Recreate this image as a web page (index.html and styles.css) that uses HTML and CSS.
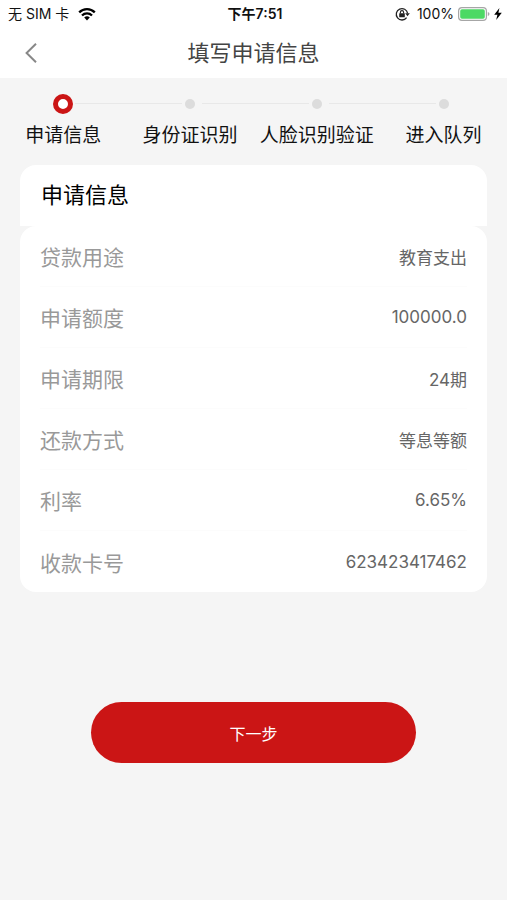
FILE: index.html
```
<!DOCTYPE html>
<html lang="zh-CN">
<head>
    <meta charset="UTF-8">
    <meta name="viewport" content="width=device-width, initial-scale=1.0">
    <title>填写申请信息</title>
    <link rel="stylesheet" href="styles.css">
</head>
<body>
    <header class="header">
        <div class="status-bar">
            <div class="status-left">
                <span>无 SIM 卡</span>
                <svg width="18" height="14" viewBox="0 0 18 14" fill="none" stroke="#000" stroke-width="2.3">
                    <path d="M1.2 5.4a11 11 0 0 1 15.6 0"/>
                    <path d="M4 8.5a7 7 0 0 1 10 0"/>
                    <path d="M9 13.4L6.2 10.6a4 4 0 0 1 5.6 0z" fill="#000" stroke="none"/>
                </svg>
            </div>
            <div class="status-time">下午7:51</div>
            <div class="status-right">
                <svg class="lock" width="15" height="14" viewBox="0 0 15 14" fill="none" stroke="#222">
                    <path d="M11.6 10.6A5.7 5.7 0 1 1 12.6 6.4" stroke-width="1.3"/>
                    <path d="M10.2 6.2h4.6l-2.3 3z" fill="#222" stroke="none"/>
                    <rect x="4.2" y="6.2" width="5.6" height="4" rx="0.5" fill="#222" stroke="none"/>
                    <path d="M5.4 6.4V5.2a1.6 1.6 0 0 1 3.2 0v1.2" stroke-width="1.1"/>
                </svg>
                <span>100%</span>
                <svg width="32" height="14" viewBox="0 0 32 14">
                    <rect x="0.6" y="0.6" width="27.8" height="12.8" rx="3.4" fill="#fff" stroke="#a6a6a6" stroke-width="1.2"/>
                    <rect x="2.2" y="2.2" width="24.6" height="9.6" rx="1.8" fill="#4cd964"/>
                    <path d="M29.8 5v4q1.7-.5 1.7-2t-1.7-2z" fill="#a6a6a6"/>
                </svg>
                <svg width="8" height="12" viewBox="0 0 8 12">
                    <path d="M5.4 0L0.2 6.8h3.2L2.2 12l5.6-7.2H4.4z" fill="#000"/>
                </svg>
            </div>
        </div>
        <div class="nav-bar">
            <button class="back" type="button" aria-label="返回">
                <svg width="12" height="20" viewBox="0 0 12 20" fill="none" stroke="#888" stroke-width="2">
                    <path d="M11 0.8L1.6 10l9.4 9.2"/>
                </svg>
            </button>
            <h1 class="title">填写申请信息</h1>
        </div>
    </header>

    <main>
        <ol class="steps">
            <li class="step active"><span class="dot"></span>申请信息</li>
            <li class="step"><span class="dot"></span>身份证识别</li>
            <li class="step"><span class="dot"></span>人脸识别验证</li>
            <li class="step"><span class="dot"></span>进入队列</li>
        </ol>

        <section class="info">
            <h2 class="info-title">申请信息</h2>
            <dl class="info-list">
                <div class="row"><dt>贷款用途</dt><dd>教育支出</dd></div>
                <div class="row"><dt>申请额度</dt><dd>100000.0</dd></div>
                <div class="row"><dt>申请期限</dt><dd>24期</dd></div>
                <div class="row"><dt>还款方式</dt><dd>等息等额</dd></div>
                <div class="row"><dt>利率</dt><dd>6.65%</dd></div>
                <div class="row"><dt>收款卡号</dt><dd>623423417462</dd></div>
            </dl>
        </section>

        <button class="next" type="button">下一步</button>
    </main>
</body>
</html>
```
FILE: styles.css
```
* {
    box-sizing: border-box;
}
body {
    margin: 0;
    min-height: 100vh;
    background: #f5f5f5;
    color: #111;
    font-family: Inter, "Noto Sans CJK SC", sans-serif;
}
.header {
    background: #fff;
}
.status-bar {
    display: grid;
    grid-template-columns: 1fr auto 1fr;
    align-items: center;
    height: 28px;
    padding: 0 5px 0 8px;
    font-size: 14px;
    line-height: 20px;
}
.status-left,
.status-right {
    display: flex;
    align-items: center;
    gap: 9px;
}
.status-right {
    justify-content: flex-end;
    gap: 4px;
}
.status-time {
    font-weight: 600;
}
.lock {
    margin-right: 3px;
}
.nav-bar {
    display: grid;
    grid-template-columns: 1fr auto 1fr;
    align-items: center;
    height: 50px;
    padding: 0 20px;
}
.back {
    display: flex;
    justify-self: start;
    padding: 5px;
    border: 0;
    background: none;
    cursor: pointer;
}
.title {
    margin: 0;
    color: #444;
    font-size: 22px;
    font-weight: 400;
    line-height: 32px;
}
.steps {
    display: grid;
    grid-template-columns: repeat(4, 1fr);
    margin: 0;
    padding: 16px 0 15px;
    list-style: none;
}
.step {
    position: relative;
    display: flex;
    flex-direction: column;
    align-items: center;
    gap: 8px;
    font-size: 19px;
    line-height: 28px;
    white-space: nowrap;
}
.dot {
    width: 10px;
    height: 10px;
    margin: 5px 0;
    border-radius: 50%;
    background: #dcdcdc;
}
.active .dot {
    width: 20px;
    height: 20px;
    margin: 0;
    border: 5px solid #cb1515;
    background: #fff;
}
/* line to the next step */
.step:not(:last-child)::after {
    content: "";
    position: absolute;
    top: 9px;
    left: calc(50% + 12px);
    width: calc(100% - 20px);
    height: 1px;
    background: #e8e8e8;
}
.info {
    margin: 0 20px;
}
.info-title {
    margin: 0;
    padding: 0 21px;
    border-radius: 16px 16px 0 0;
    background: #fff;
    color: #000;
    font-size: 22px;
    font-weight: 400;
    line-height: 61px;
}
.info-list {
    margin: 0;
    padding: 0 20px;
    border-radius: 16px;
    background: #fff;
}
.row {
    display: flex;
    justify-content: space-between;
    align-items: center;
    height: 61px;
}
.row:not(:last-child) {
    border-bottom: 1px solid #fcfcfc;
}
.row dt {
    color: #999;
    font-size: 21px;
}
.row dd {
    margin: 0;
    color: #666;
    font-size: 17px;
}
.next {
    display: block;
    width: 64%;
    height: 61px;
    margin: 110px auto 0;
    border: 0;
    border-radius: 31px;
    background: #cb1515;
    color: #fff;
    font-family: inherit;
    font-size: 16px;
    cursor: pointer;
}
```
